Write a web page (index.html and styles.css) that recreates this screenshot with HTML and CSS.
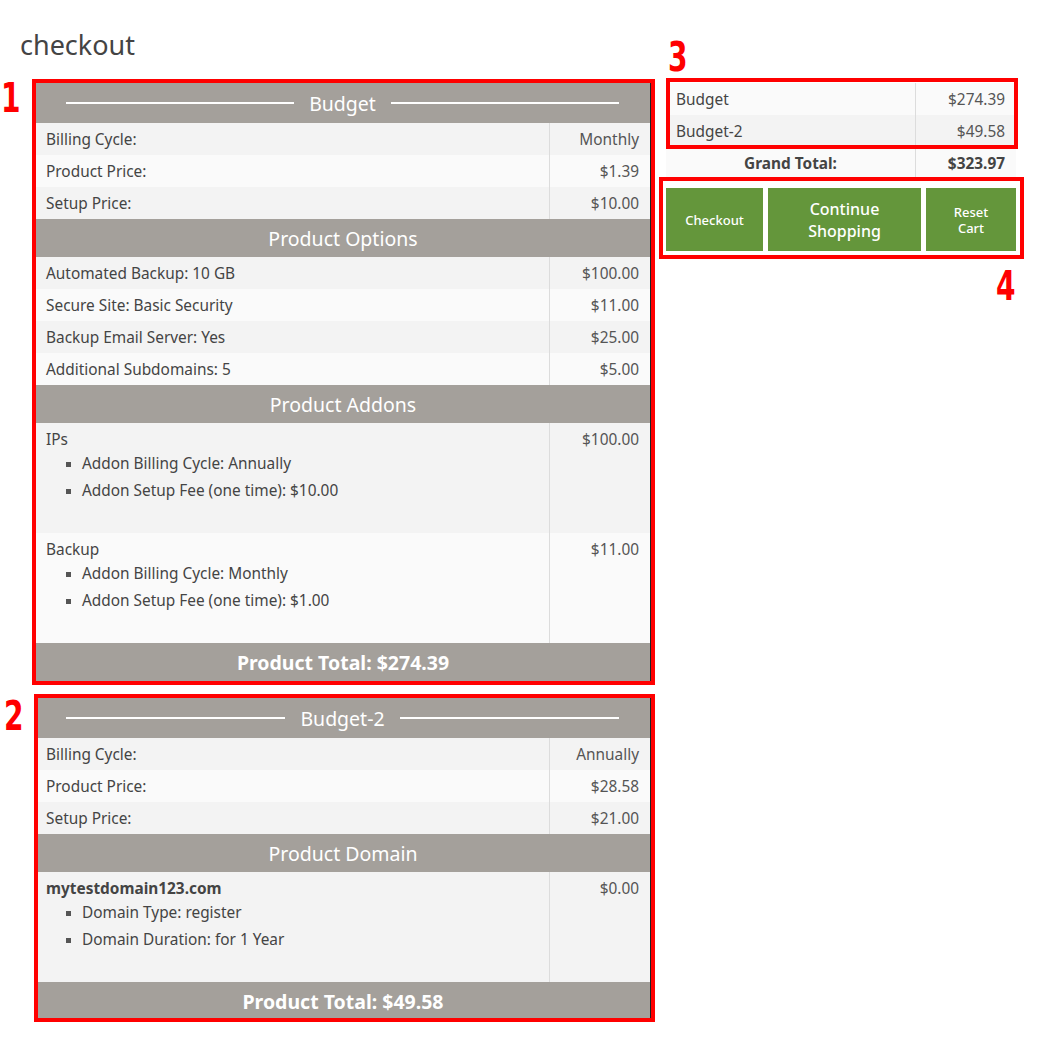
FILE: index.html
```html
<!DOCTYPE html>
<html>
<head>
<meta charset="utf-8">
<title>checkout</title>
<link rel="stylesheet" href="styles.css">
</head>
<body>
<div class="page">
  <h1 class="title">checkout</h1>
  <div class="layout">
    <div class="products">
      <section class="product">
        <div class="product-head"><span>Budget</span></div>
        <div class="row odd"><div class="label">Billing Cycle:</div><div class="value">Monthly</div></div>
        <div class="row even"><div class="label">Product Price:</div><div class="value">$1.39</div></div>
        <div class="row odd"><div class="label">Setup Price:</div><div class="value">$10.00</div></div>
        <div class="section-head">Product Options</div>
        <div class="row odd"><div class="label">Automated Backup: 10 GB</div><div class="value">$100.00</div></div>
        <div class="row even"><div class="label">Secure Site: Basic Security</div><div class="value">$11.00</div></div>
        <div class="row odd"><div class="label">Backup Email Server: Yes</div><div class="value">$25.00</div></div>
        <div class="row even"><div class="label">Additional Subdomains: 5</div><div class="value">$5.00</div></div>
        <div class="section-head">Product Addons</div>
        <div class="block odd">
          <div class="label">
            <div class="item-name">IPs</div>
            <ul class="details">
              <li>Addon Billing Cycle: Annually</li>
              <li>Addon Setup Fee (one time): $10.00</li>
            </ul>
          </div>
          <div class="value">$100.00</div>
        </div>
        <div class="block even">
          <div class="label">
            <div class="item-name">Backup</div>
            <ul class="details">
              <li>Addon Billing Cycle: Monthly</li>
              <li>Addon Setup Fee (one time): $1.00</li>
            </ul>
          </div>
          <div class="value">$11.00</div>
        </div>
        <div class="product-total">Product Total: $274.39</div>
      </section>

      <section class="product">
        <div class="product-head"><span>Budget-2</span></div>
        <div class="row odd"><div class="label">Billing Cycle:</div><div class="value">Annually</div></div>
        <div class="row even"><div class="label">Product Price:</div><div class="value">$28.58</div></div>
        <div class="row odd"><div class="label">Setup Price:</div><div class="value">$21.00</div></div>
        <div class="section-head">Product Domain</div>
        <div class="block odd">
          <div class="label">
            <div class="item-name strong">mytestdomain123.com</div>
            <ul class="details">
              <li>Domain Type: register</li>
              <li>Domain Duration: for 1 Year</li>
            </ul>
          </div>
          <div class="value">$0.00</div>
        </div>
        <div class="product-total">Product Total: $49.58</div>
      </section>
    </div>

    <aside class="summary">
      <div class="sum-table">
        <div class="sum-row even"><div class="label">Budget</div><div class="value">$274.39</div></div>
        <div class="sum-row odd"><div class="label">Budget-2</div><div class="value">$49.58</div></div>
        <div class="sum-row total"><div class="label">Grand Total:</div><div class="value">$323.97</div></div>
      </div>
      <div class="actions">
        <button class="btn btn-checkout" type="button">Checkout</button>
        <button class="btn btn-continue" type="button">Continue<br>Shopping</button>
        <button class="btn btn-reset" type="button">Reset<br>Cart</button>
      </div>
    </aside>
  </div>

  <div class="annot annot-1"></div>
  <div class="annot annot-2"></div>
  <div class="annot annot-3"></div>
  <div class="annot annot-4"></div>
  <div class="num num-1">1</div>
  <div class="num num-2">2</div>
  <div class="num num-3">3</div>
  <div class="num num-4">4</div>
</div>
</body>
</html>
```

FILE: styles.css
```css
* { box-sizing: border-box; }

body {
  margin: 0;
  background: #fff;
  color: #444;
  font-family: "Noto Sans", "Open Sans", sans-serif;
  font-size: 15.4px;
}

.page {
  position: relative;
  padding: 26px 0 0 20px;
  min-height: 1039px;
}

.title {
  margin: 0 0 19px;
  font-size: 27px;
  font-weight: 400;
  line-height: 38px;
  color: #444;
}

.layout {
  display: flex;
  align-items: flex-start;
  gap: 15px;
  padding-left: 16px;
}

.products {
  width: 615px;
  display: flex;
  flex-direction: column;
  gap: 17px;
}

.product {
  border-right: 1px solid #222;
  background: #f3f3f3;
}

.product-head {
  height: 40px;
  display: flex;
  align-items: center;
  padding: 0 31px 0 30px;
  background: #a4a09b;
  color: #fff;
  font-size: 19.5px;
}

.product-head::before,
.product-head::after {
  content: "";
  flex: 1;
  height: 2px;
  background: #fff;
}

.product-head span {
  padding: 0 15px;
}

.section-head {
  height: 38px;
  display: flex;
  align-items: center;
  justify-content: center;
  background: #a4a09b;
  color: #fff;
  font-size: 19.5px;
}

.product-total {
  height: 38px;
  display: flex;
  align-items: center;
  justify-content: center;
  background: #a4a09b;
  color: #fff;
  font-size: 19.5px;
  font-weight: 700;
}

.odd { background: #f3f3f3; }
.even { background: #fafafa; }

.row {
  display: flex;
  height: 32px;
}

.row .label,
.sum-row .label {
  flex: 1;
  display: flex;
  align-items: center;
  padding: 0 10px;
}

.row .value,
.sum-row .value {
  width: 101px;
  display: flex;
  align-items: center;
  justify-content: flex-end;
  padding-right: 11px;
  border-left: 1px solid #dcdcdc;
  color: #555;
}

.block {
  display: flex;
  height: 110px;
}

.block .label {
  flex: 1;
  padding: 6px 10px 0;
}

.block .value {
  width: 101px;
  padding: 6px 11px 0 0;
  text-align: right;
  line-height: 22px;
  border-left: 1px solid #dcdcdc;
  color: #555;
}

.item-name {
  line-height: 22px;
}

.item-name.strong {
  font-weight: 700;
}

.details {
  margin: 2px 0 0;
  padding-left: 36px;
  list-style: square;
}

.details li {
  line-height: 22px;
  margin-bottom: 5px;
}

.details li::marker {
  color: #555;
  font-size: 13px;
}

.summary {
  width: 350px;
}

.sum-row {
  display: flex;
  height: 32px;
}

.sum-row.total {
  height: 33px;
  background: #fafafa;
  font-weight: 700;
}

.sum-row.total .label {
  justify-content: center;
}

.sum-row.total .value {
  color: #444;
}

.actions {
  display: flex;
  gap: 5px;
  margin-top: 8px;
}

.btn {
  height: 63px;
  border: 0;
  padding: 0;
  background: #64963b;
  color: #fff;
  font-family: "Noto Sans", "Open Sans", sans-serif;
  font-weight: 500;
  cursor: pointer;
}

.btn-checkout {
  width: 97px;
  font-size: 13px;
}

.btn-continue {
  width: 153px;
  font-size: 16px;
  line-height: 22px;
}

.btn-reset {
  width: 90px;
  font-size: 13px;
  line-height: 16px;
}

.annot {
  position: absolute;
  border: 4px solid #ff0000;
  pointer-events: none;
}

.annot-1 { left: 32px; top: 79px; width: 623px; height: 606px; }
.annot-2 { left: 34px; top: 694px; width: 621px; height: 328px; }
.annot-3 { left: 666px; top: 78px; width: 352px; height: 71px; }
.annot-4 { left: 659px; top: 177px; width: 365px; height: 82px; }

.num {
  position: absolute;
  color: #ff0000;
  font-family: "DejaVu Sans Condensed", "Liberation Sans", sans-serif;
  font-weight: 700;
  font-size: 40px;
  line-height: 1;
  transform: scaleX(0.78);
  transform-origin: left top;
}

.num-1 { left: 1px; top: 78px; }
.num-2 { left: 4px; top: 696px; }
.num-3 { left: 668px; top: 37px; }
.num-4 { left: 996px; top: 266px; }
```
